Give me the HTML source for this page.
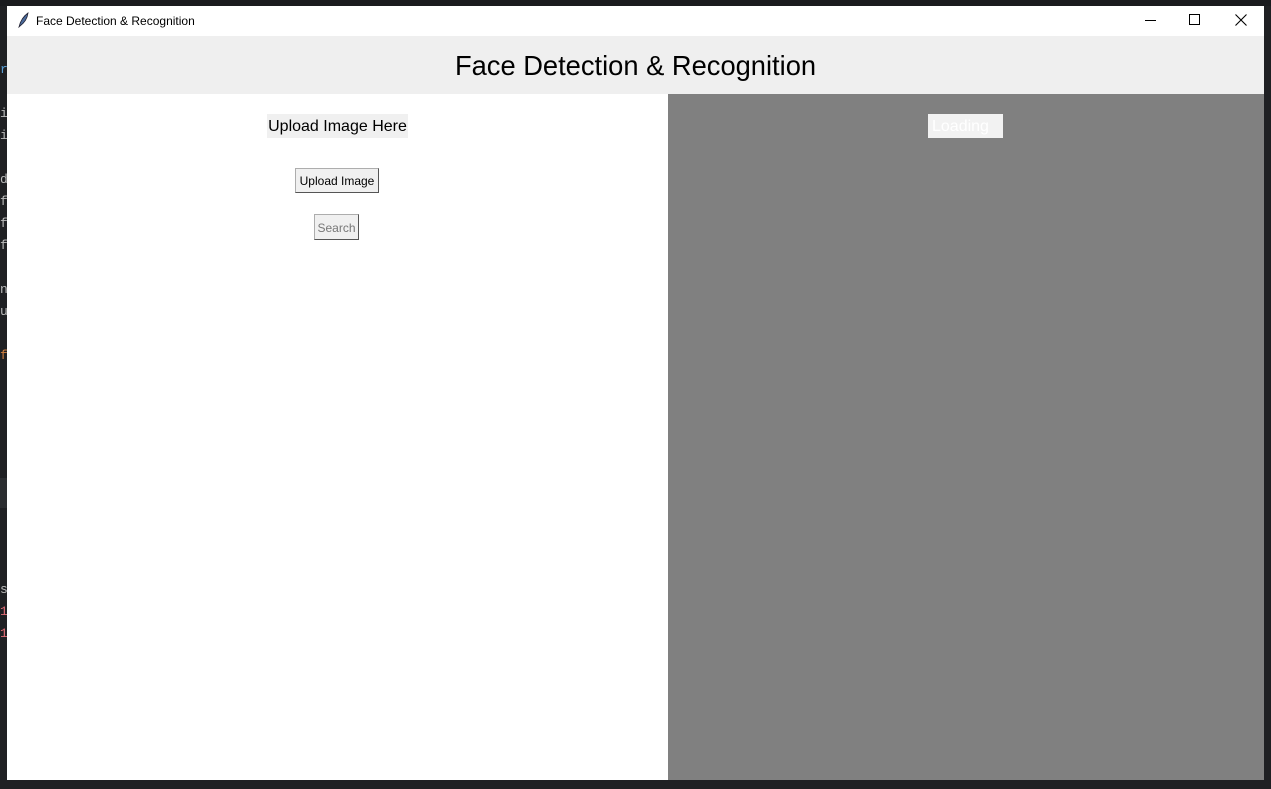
<!DOCTYPE html><html><head><style>
body{margin:0;width:1271px;height:789px;background:#1f2023;position:relative;overflow:hidden;font-family:"Liberation Sans",sans-serif}
.a{position:absolute}
.code{font-family:"Liberation Mono",monospace;font-size:13px;color:#bbb}
</style></head><body>
<div class="a" style="left:0;top:0;width:1271px;height:6px;background:#1a1b1e"></div>
<div class="a" style="left:0;top:478px;width:7px;height:30px;background:#2b2d30"></div>
<div class="a code" style="left:0;top:582px">s</div>
<div class="a code" style="left:0;top:604px;color:#e06c75">1</div>
<div class="a code" style="left:0;top:626px;color:#e06c75">1</div>
<div class="a code" style="left:0;top:62px;color:#5a9fd4">r</div>
<div class="a code" style="left:0;top:106px">i</div>
<div class="a code" style="left:0;top:128px">i</div>
<div class="a code" style="left:0;top:172px">d</div>
<div class="a code" style="left:0;top:194px">f</div>
<div class="a code" style="left:0;top:216px">f</div>
<div class="a code" style="left:0;top:238px">f</div>
<div class="a code" style="left:0;top:282px">n</div>
<div class="a code" style="left:0;top:304px">u</div>
<div class="a code" style="left:0;top:348px;color:#d08040">f</div>
<div class="a" style="left:7px;top:6px;width:1257px;height:30px;background:#fff"></div>
<svg class="a" style="left:16px;top:12px" width="14" height="16"><path d="M3 15 Q5 6 12 1 Q11 9 4 14 Z" fill="#4a6a9a" stroke="#223" stroke-width=".8"/></svg>
<div class="a" style="left:36px;top:14px;color:#000;font-size:12px">Face Detection &amp; Recognition</div>
<div class="a" style="left:1145px;top:20px;width:11px;height:1px;background:#000"></div>
<div class="a" style="left:1189px;top:14px;width:9px;height:9px;border:1px solid #000"></div>
<svg class="a" style="left:1235px;top:14px" width="12" height="12"><path d="M0.5 .5L11.5 11.5M11.5 .5L.5 11.5" stroke="#000" stroke-width="1.1"/></svg>
<div class="a" style="left:7px;top:36px;width:1257px;height:58px;background:#efefef"></div>
<div class="a" style="left:7px;top:50px;width:1257px;text-align:center;font-size:27.3px;color:#000">Face Detection &amp; Recognition</div>
<div class="a" style="left:7px;top:94px;width:661px;height:686px;background:#fff"></div>
<div class="a" style="left:668px;top:94px;width:596px;height:686px;background:#808080"></div>
<div class="a" style="left:267px;top:114px;width:141px;height:24px;background:#f0f0f0;font-size:16px;line-height:26px;text-align:center">Upload Image Here</div>
<div class="a" style="left:295px;top:168px;width:82px;height:23px;background:#f0f0f0;border:1px solid #adadad;border-right-color:#555;border-bottom-color:#555;font-size:12px;line-height:25px;text-align:center">Upload Image</div>
<div class="a" style="left:314px;top:214px;width:43px;height:24px;background:#f0f0f0;border:1px solid #adadad;border-right-color:#555;border-bottom-color:#555;font-size:12px;color:#777;line-height:26px;text-align:center">Search</div>
<div class="a" style="left:928px;top:114px;width:75px;height:24px;background:#f2f2f2;color:#fff;font-size:16px;line-height:26px;padding-left:4px;box-sizing:border-box">Loading</div>
</body></html>
